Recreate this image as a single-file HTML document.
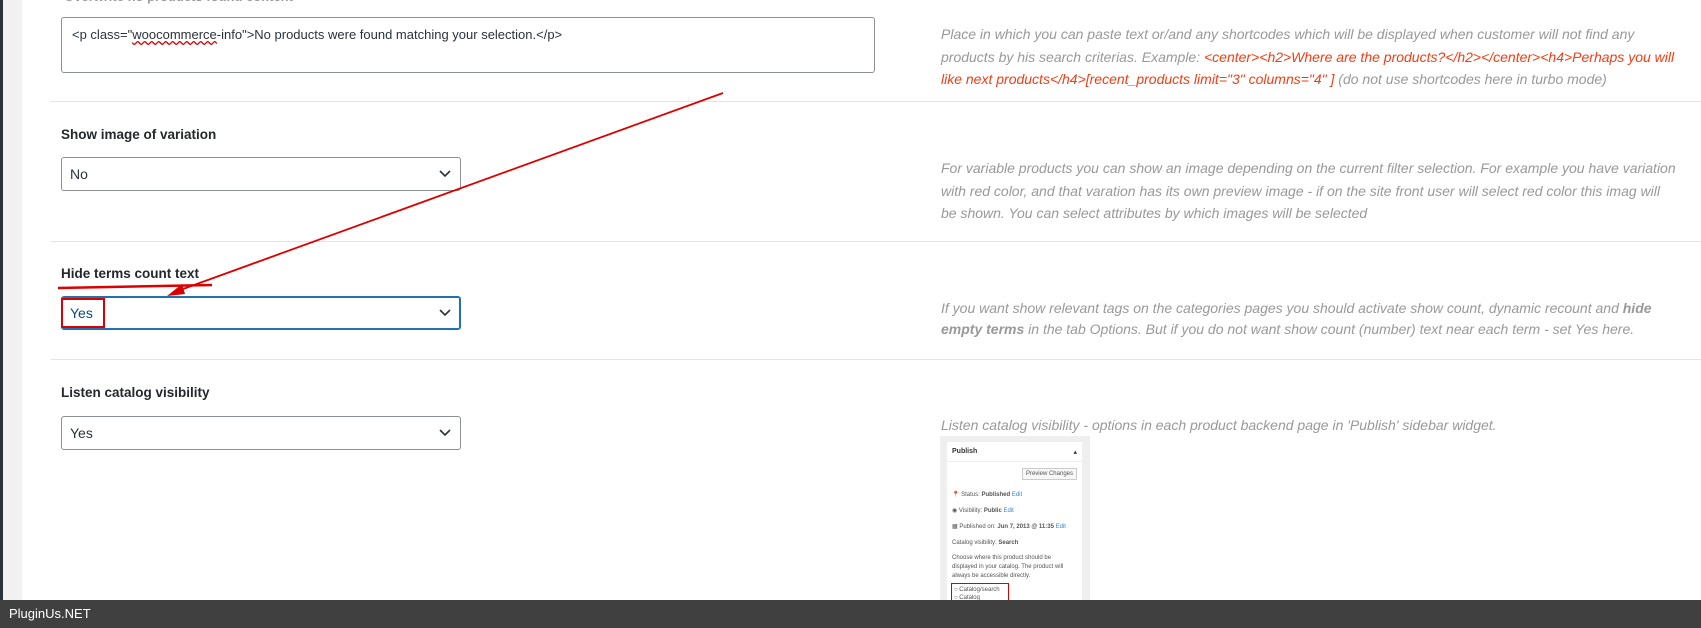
<!DOCTYPE html>
<html><head><meta charset="utf-8"><style>
*{box-sizing:border-box;margin:0;padding:0}
body{width:1701px;height:628px;overflow:hidden;background:#fff;font-family:"Liberation Sans",sans-serif;position:relative}
.a{position:absolute}
.lbl{position:absolute;left:61px;font-size:13.5px;font-weight:bold;color:#23282d}
.sel{position:absolute;left:61px;width:400px;height:34px;border:1px solid #8c8f94;border-radius:3px;font-size:14px;color:#2c3338;padding:8px 8px}
.sel svg{position:absolute;right:9px;top:12px}
.hr{position:absolute;left:51px;right:0;height:1px;background:#e2e4e7}
.d{position:absolute;left:941px;width:735px;font-size:14px;font-style:italic;color:#999;line-height:22.6px;letter-spacing:0}
.r{color:#f43c12}
</style></head><body>
<div class="a" style="left:0;top:0;width:3px;height:628px;background:#2c3338"></div>
<div class="a" style="left:3px;top:0;width:19px;height:628px;background:#f1f1f1"></div>
<div class="a" style="left:64px;top:-11px;font-size:13px;font-weight:bold;color:#999">Overwrite no products found content</div>
<div class="a" style="left:61px;top:17px;width:814px;height:56px;border:1px solid #8c8f94;border-radius:3px;font-size:13px;color:#2c3338;padding:9px 10px">&lt;p class="<span style="text-decoration:underline wavy #d00">woocommerce</span>-info"&gt;No products were found matching your selection.&lt;/p&gt;</div>
<div class="d" style="top:23px">Place in which you can paste text or/and any shortcodes which will be displayed when customer will not find any products by his search criterias. Example: <span class="r">&lt;center&gt;&lt;h2&gt;Where are the products?&lt;/h2&gt;&lt;/center&gt;&lt;h4&gt;Perhaps you will like next products&lt;/h4&gt;[recent_products limit="3" columns="4" ]</span> (do not use shortcodes here in turbo mode)</div>
<div class="hr" style="top:101px"></div>
<div class="lbl" style="top:127px">Show image of variation</div>
<div class="sel" style="top:157px">No<svg width="12" height="8" viewBox="0 0 12 8"><path d="M1 1l5 5 5-5" stroke="#2c3338" stroke-width="1.6" fill="none"/></svg></div>
<div class="d" style="top:157px">For variable products you can show an image depending on the current filter selection. For example you have variation with red color, and that varation has its own preview image - if on the site front user will select red color this imag will be shown. You can select attributes by which images will be selected</div>
<div class="hr" style="top:241px"></div>
<div class="lbl" style="top:266px">Hide terms count text</div>
<div class="sel" style="top:296px;border-color:#2271b1;box-shadow:0 0 0 1px #2271b1 inset;color:#0a4b78">Yes<svg width="12" height="8" viewBox="0 0 12 8"><path d="M1 1l5 5 5-5" stroke="#2c3338" stroke-width="1.6" fill="none"/></svg></div>
<div class="d" style="top:298px;line-height:21px">If you want show relevant tags on the categories pages you should activate show count, dynamic recount and <b>hide empty terms</b> in the tab Options. But if you do not want show count (number) text near each term - set Yes here.</div>
<div class="hr" style="top:359px"></div>
<div class="lbl" style="top:385px">Listen catalog visibility</div>
<div class="sel" style="top:416px">Yes<svg width="12" height="8" viewBox="0 0 12 8"><path d="M1 1l5 5 5-5" stroke="#2c3338" stroke-width="1.6" fill="none"/></svg></div>
<div class="d" style="top:414px">Listen catalog visibility - options in each product backend page in 'Publish' sidebar widget.</div>
<div class="a" style="left:940px;top:436px;width:150px;height:170px;background:#efefef">
 <div class="a" style="left:7px;top:6px;width:135px;height:170px;background:#fff;font-size:6px;color:#555">
  <div style="padding:6px 5px;font-weight:bold;font-size:7px;border-bottom:1px solid #eee;color:#333">Publish<span style="float:right;font-weight:normal">▴</span></div>
  <div class="a" style="right:5px;top:26px;border:1px solid #ccc;background:#f7f7f7;padding:2px 3px;font-size:6px">Preview Changes</div>
  <div class="a" style="left:5px;top:49px">📍 Status: <b>Published</b> <span style="color:#38c">Edit</span></div>
  <div class="a" style="left:5px;top:65px">◉ Visibility: <b>Public</b> <span style="color:#38c">Edit</span></div>
  <div class="a" style="left:5px;top:81px">▦ Published on: <b>Jun 7, 2013 @ 11:35</b> <span style="color:#38c">Edit</span></div>
  <div class="a" style="left:5px;top:98px">Catalog visibility: <b>Search</b></div>
  <div class="a" style="left:5px;top:112px;width:125px;line-height:9px">Choose where this product should be displayed in your catalog. The product will always be accessible directly.</div>
  <div class="a" style="left:4px;top:141px;border:1px solid #d00;width:58px;padding:2px;line-height:8px">○ Catalog/search<br>○ Catalog</div>
 </div>
</div>
<div class="a" style="left:61px;top:298px;width:44px;height:30px;border:2px solid #d00"></div>
<svg class="a" style="left:0;top:0" width="1701" height="628">
<path d="M58 288 L212 285" stroke="#d00" stroke-width="2.5"/>
<path d="M723 93 L172 293" stroke="#d00" stroke-width="1.8"/>
<path d="M167 296 L182 284 L185 294 Z" fill="#d00"/>
</svg>
<div class="a" style="left:0;top:600px;width:1701px;height:28px;background:#404040;color:#fff;font-size:13px;padding:6px 9px">PluginUs.NET</div>
</body></html>
